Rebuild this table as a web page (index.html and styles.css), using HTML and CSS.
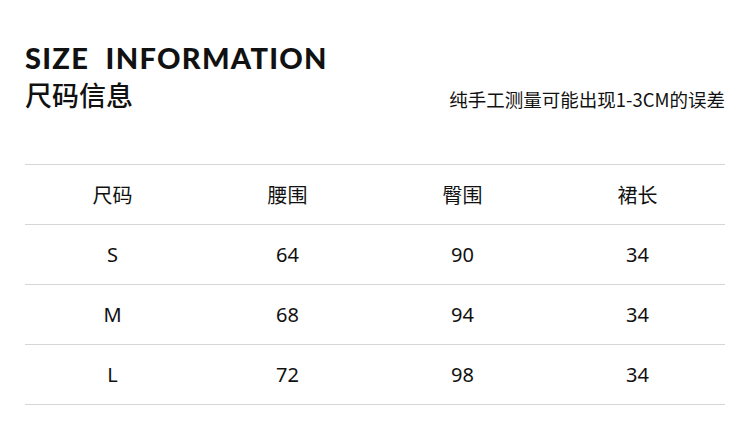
FILE: index.html
```html
<!DOCTYPE html>
<html lang="zh">
<head>
<meta charset="utf-8">
<link rel="stylesheet" href="styles.css">
</head>
<body>
<div class="page">
  <header class="head">
    <div class="titles">
      <div class="en">SIZE&nbsp;&nbsp;INFORMATION</div>
      <div class="cn">尺码信息</div>
    </div>
    <div class="note">纯手工测量可能出现1-3CM的误差</div>
  </header>
  <div class="table">
    <div class="row hdr"><span>尺码</span><span>腰围</span><span>臀围</span><span>裙长</span></div>
    <div class="row"><span>S</span><span>64</span><span>90</span><span>34</span></div>
    <div class="row"><span>M</span><span>68</span><span>94</span><span>34</span></div>
    <div class="row"><span>L</span><span>72</span><span>98</span><span>34</span></div>
  </div>
</div>
</body>
</html>
```
FILE: styles.css
```css
html, body { margin: 0; padding: 0; background: #fff; }
body { width: 750px; height: 446px; overflow: hidden; color: #111; font-family: "Noto Sans", "Noto Sans CJK SC", sans-serif; }
.page { padding: 0 25px; }
.head { display: flex; justify-content: space-between; align-items: flex-end; padding-top: 39px; height: 165px; padding-bottom: 50px; box-sizing: border-box; border-bottom: 1px solid #d6d6d6; }
.titles { display: flex; flex-direction: column; }
.en { font-family: "Lato", sans-serif; font-weight: 900; font-size: 29px; line-height: 36px; letter-spacing: 1.3px; }
.cn { font-family: "Noto Sans CJK SC", sans-serif; font-weight: 500; font-size: 27px; line-height: 38px; }
.note { font-family: "Noto Sans CJK SC", sans-serif; font-size: 18.5px; line-height: 24px; padding-bottom: 3px; }
.table { display: flex; flex-direction: column; }
.row { display: grid; grid-template-columns: repeat(4, 1fr); height: 60px; align-items: center; border-bottom: 1px solid #d6d6d6; box-sizing: border-box; font-size: 20px; }
.row span { text-align: center; }
.hdr span { font-family: "Noto Sans CJK SC", sans-serif; }
```
